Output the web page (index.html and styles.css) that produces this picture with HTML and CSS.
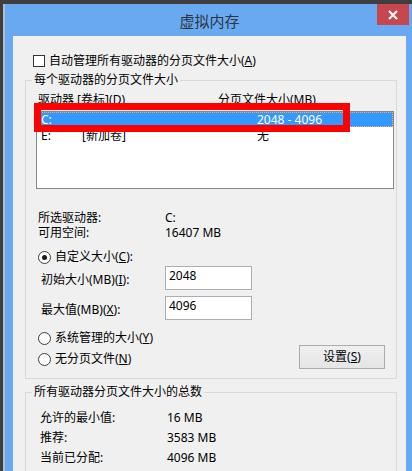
FILE: index.html
```html
<!DOCTYPE html>
<html lang="zh-CN">
<head>
<meta charset="utf-8">
<title>虚拟内存</title>
<link rel="stylesheet" href="styles.css">
</head>
<body>
<div class="window">
  <div class="titlebar">
    <span class="title">虚拟内存</span>
    <div class="close">
      <svg width="10" height="10" viewBox="0 0 10 10"><path d="M1 1 L9 9 M9 1 L1 9" stroke="#fff" stroke-width="2" fill="none"/></svg>
    </div>
  </div>
  <div class="content">
    <div class="check-row">
      <span class="checkbox"></span>
      <span>自动管理所有驱动器的分页文件大小(<u>A</u>)</span>
    </div>
    <fieldset class="group g1">
      <legend>每个驱动器的分页文件大小</legend>
      <div class="list-head">
        <span class="h1">驱动器 [卷标](<u>D</u>)</span>
        <span>分页文件大小(MB)</span>
      </div>
      <div class="list-wrap">
        <div class="list">
          <div class="row sel">
            <span class="c-drive">C:</span>
            <span class="c-label"></span>
            <span class="c-size">2048 - 4096</span>
          </div>
          <div class="row">
            <span class="c-drive">E:</span>
            <span class="c-label">[新加卷]</span>
            <span class="c-size">无</span>
          </div>
        </div>
        <div class="mark"></div>
      </div>
      <div class="info">
        <div class="info-row"><span class="info-label">所选驱动器:</span><span>C:</span></div>
        <div class="info-row"><span class="info-label">可用空间:</span><span>16407 MB</span></div>
      </div>
      <div class="radio-row custom">
        <span class="radio on"></span>
        <span>自定义大小(<u>C</u>):</span>
      </div>
      <div class="field-row first">
        <span class="field-label">初始大小(MB)(<u>I</u>):</span>
        <span class="input">2048</span>
      </div>
      <div class="field-row">
        <span class="field-label">最大值(MB)(<u>X</u>):</span>
        <span class="input">4096</span>
      </div>
      <div class="bottom">
        <div class="radios">
          <div class="radio-row"><span class="radio"></span><span>系统管理的大小(<u>Y</u>)</span></div>
          <div class="radio-row"><span class="radio"></span><span>无分页文件(<u>N</u>)</span></div>
        </div>
        <div class="button">设置(<u>S</u>)</div>
      </div>
    </fieldset>
    <fieldset class="group g2">
      <legend>所有驱动器分页文件大小的总数</legend>
      <div class="totals">
        <div class="total-row"><span class="total-label">允许的最小值:</span><span>16 MB</span></div>
        <div class="total-row"><span class="total-label">推荐:</span><span>3583 MB</span></div>
        <div class="total-row"><span class="total-label">当前已分配:</span><span>4096 MB</span></div>
      </div>
    </fieldset>
  </div>
</div>
</body>
</html>
```

FILE: styles.css
```css
html, body {
  margin: 0;
  padding: 0;
}

body {
  background: #3f3f3f;
  width: 412px;
  height: 471px;
  overflow: hidden;
  font-family: "Noto Sans", "Noto Sans CJK SC", sans-serif;
  font-size: 12px;
  color: #000;
}

u {
  text-decoration: underline;
  text-underline-offset: 1px;
}

.window {
  margin: 4px 0 0 3px;
  height: 467px;
  border-left: 2px solid #aebed0;
  background: #69a9f1;
  padding: 0 6px 0 8px;
}

.titlebar {
  position: relative;
  height: 32px;
  display: flex;
  align-items: center;
  justify-content: center;
}

.title {
  font-family: "Noto Sans CJK SC", sans-serif;
  font-size: 15px;
  line-height: 20px;
  color: #2c3540;
  margin-top: 2px;
}

.close {
  position: absolute;
  top: 0;
  right: -3px;
  width: 32px;
  height: 21px;
  background: #c8474f;
  display: flex;
  align-items: center;
  justify-content: center;
}

.close svg {
  display: block;
}

.content {
  background: #f0f0f0;
  height: 435px;
  overflow: hidden;
}

.check-row {
  margin-top: 17px;
  padding-left: 20px;
  height: 16px;
  line-height: 16px;
  display: flex;
  align-items: center;
  gap: 4px;
}

.checkbox {
  width: 12px;
  height: 12px;
  box-sizing: border-box;
  border: 1px solid #333;
  background: #fff;
}

.group {
  margin: 0 0 0 12px;
  width: 372px;
  box-sizing: border-box;
  min-width: 0;
  border: 1px solid #d9d9d9;
  padding: 0;
}

.group legend {
  margin-left: 6px;
  padding: 0 2px;
  line-height: 16px;
  height: 16px;
}

.g1 {
  margin-top: 3px;
  padding-bottom: 9px;
}

.list-head {
  margin-top: 4px;
  padding-left: 12px;
  height: 16px;
  line-height: 16px;
  display: flex;
}

.list-head .h1 {
  width: 180px;
}

.list-wrap {
  position: relative;
  margin: 3px 0 0 10px;
  width: 358px;
}

.list {
  height: 78px;
  box-sizing: border-box;
  border: 1px solid #828790;
  background: #fff;
}

.row {
  height: 16px;
  line-height: 16px;
  display: flex;
  padding-left: 4px;
}

.row.sel {
  background: #3399ff;
  color: #fff;
  outline: 1px dotted #f3b25a;
  outline-offset: -1px;
  height: 15px;
  line-height: 15px;
  margin-bottom: 1px;
}

.c-drive {
  width: 41px;
}

.c-label {
  width: 175px;
}

.mark {
  position: absolute;
  left: -2px;
  top: -8px;
  width: 316px;
  height: 29px;
  box-sizing: border-box;
  border: 7px solid #ff0000;
}

.info {
  margin-top: 21px;
  padding-left: 12px;
}

.info-row {
  height: 15px;
  line-height: 15px;
  display: flex;
}

.info-label {
  width: 127px;
}

.radio-row {
  height: 16px;
  line-height: 16px;
  display: flex;
  align-items: center;
  gap: 4px;
}

.radio-row.custom {
  margin-top: 9px;
  padding-left: 12px;
}

.radio {
  width: 13px;
  height: 13px;
  box-sizing: border-box;
  border: 1px solid #3c3c3c;
  border-radius: 50%;
  background: #fff;
  display: flex;
  align-items: center;
  justify-content: center;
}

.radio.on::after {
  content: "";
  width: 5px;
  height: 5px;
  border-radius: 50%;
  background: #1a1a1a;
}

.field-row {
  margin-top: 6px;
  padding-left: 15px;
  display: flex;
  align-items: center;
  height: 24px;
}

.field-row.first {
  margin-top: 1px;
}

.field-label {
  width: 124px;
  line-height: 16px;
  margin-top: 3px;
}

.input {
  width: 87px;
  height: 24px;
  box-sizing: border-box;
  border: 1px solid #abadb3;
  background: #fff;
  padding: 1px 3px 0;
  line-height: 16px;
}

.bottom {
  margin-top: 10px;
  display: flex;
  justify-content: space-between;
  align-items: flex-start;
  padding-left: 12px;
  padding-right: 11px;
}

.radios {
  display: flex;
  flex-direction: column;
  gap: 5px;
}

.button {
  margin-top: 15px;
  width: 86px;
  height: 24px;
  box-sizing: border-box;
  border: 1px solid #acacac;
  background: linear-gradient(#f0f0f0, #e5e5e5);
  display: flex;
  align-items: center;
  justify-content: center;
  line-height: 16px;
}

.g2 {
  margin-top: 5px;
  height: 120px;
}

.totals {
  margin-top: 8px;
  padding-left: 14px;
}

.total-row {
  height: 20px;
  line-height: 20px;
  display: flex;
}

.total-label {
  width: 127px;
}
```
